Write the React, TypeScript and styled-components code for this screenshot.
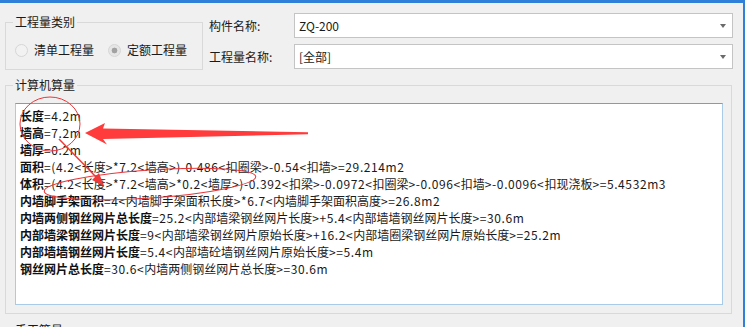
import React from "react";
import styled, { createGlobalStyle } from "styled-components";

const Global = createGlobalStyle`
  html, body { margin: 0; padding: 0; background: #ffffff; }
  body { font-family: "Noto Sans CJK SC", "Noto Sans", sans-serif; font-size: 12px; color: #1a1a1a; }
  * { box-sizing: border-box; }
`;

const Page = styled.div`
  width: 756px;
  height: 327px;
  position: relative;
  overflow: hidden;
  background: #ffffff;
`;

const Window = styled.div`
  width: 745px;
  height: 327px;
  background: #f0f0f0;
  border-top: 3px solid #2f80d8;
  border-right: 2px solid #2f80d8;
  padding-left: 5px;
  overflow: hidden;
`;

const TopRow = styled.div`
  display: flex;
  align-items: flex-start;
  padding-top: 10px;
`;

const Group = styled.fieldset<{ $w: number; $h: number; $mt: number }>`
  margin: ${(p) => p.$mt}px 0 0 0;
  padding: 0 9px;
  min-width: 0;
  flex-shrink: 0;
  width: ${(p) => p.$w}px;
  height: ${(p) => p.$h}px;
  border: 1px solid #d9d9d9;
  border-radius: 0;
`;

const Legend = styled.legend`
  padding: 0 2px;
  margin-left: -2px;
  font-size: 12px;
  line-height: 16px;
  color: #1a1a1a;
  white-space: nowrap;
`;

const RadioRow = styled.div`
  display: flex;
  align-items: center;
  height: 16px;
  margin-top: 12px;
`;

const RadioItem = styled.label`
  display: flex;
  align-items: center;
  flex-shrink: 0;
  gap: 6px;
  margin-right: 14px;
  line-height: 16px;
  white-space: nowrap;
  color: #1a1a1a;
`;

const RadioCircle = styled.span<{ $checked?: boolean }>`
  width: 13px;
  height: 13px;
  flex-shrink: 0;
  border-radius: 50%;
  border: 1px solid #d6d6d6;
  background: ${(p) =>
    p.$checked
      ? "radial-gradient(circle, #a2a2a2 0 2.6px, #e6e6e6 3.2px 100%)"
      : "#f2f2f2"};
`;

const FormGrid = styled.div`
  display: grid;
  grid-template-columns: 85px 439px;
  grid-auto-rows: 25px;
  row-gap: 6px;
  margin-left: 6px;
  align-items: center;
`;

const FieldLabel = styled.span`
  font-size: 12px;
  color: #1a1a1a;
  line-height: 25px;
  white-space: nowrap;
`;

const Select = styled.div`
  position: relative;
  height: 25px;
  background: #ffffff;
  border: 1px solid #c4c4c4;
  padding-left: 4px;
  line-height: 23px;
  font-size: 12px;
  color: #1a1a1a;
  &::after {
    content: "";
    position: absolute;
    right: 6px;
    top: 10px;
    border-left: 3px solid transparent;
    border-right: 3px solid transparent;
    border-top: 4px solid #6a6a6a;
  }
`;

const Latin = styled.span`
  letter-spacing: 0.6px;
`;

const TextBox = styled.div`
  width: 708px;
  height: 202px;
  margin-top: 10px;
  background: #ffffff;
  border: 1px solid #a9cbe8;
  border-top-color: #7a9dc3;
  padding: 3px 4px;
  overflow: hidden;
`;

const Line = styled.div`
  line-height: 17px;
  height: 17px;
  white-space: nowrap;
  font-size: 12px;
  color: #1a1a1a;
  b { font-weight: 700; color: #111; }
`;

const Overlay = styled.svg`
  position: absolute;
  left: 0;
  top: 0;
  pointer-events: none;
`;

const lines: [string, string][] = [
  ["长度", "=4.2m"],
  ["墙高", "=7.2m"],
  ["墙厚", "=0.2m"],
  ["面积", "=(4.2<长度>*7.2<墙高>)-0.486<扣圈梁>-0.54<扣墙>=29.214m2"],
  ["体积", "=(4.2<长度>*7.2<墙高>*0.2<墙厚>)-0.392<扣梁>-0.0972<扣圈梁>-0.096<扣墙>-0.0096<扣现浇板>=5.4532m3"],
  ["内墙脚手架面积", "=4<内墙脚手架面积长度>*6.7<内墙脚手架面积高度>=26.8m2"],
  ["内墙两侧钢丝网片总长度", "=25.2<内部墙梁钢丝网片长度>+5.4<内部墙墙钢丝网片长度>=30.6m"],
  ["内部墙梁钢丝网片长度", "=9<内部墙梁钢丝网片原始长度>+16.2<内部墙圈梁钢丝网片原始长度>=25.2m"],
  ["内部墙墙钢丝网片长度", "=5.4<内部墙砼墙钢丝网片原始长度>=5.4m"],
  ["钢丝网片总长度", "=30.6<内墙两侧钢丝网片总长度>=30.6m"],
];

function Value({ text }: { text: string }) {
  const parts = text.match(/[\x00-\x7f]+|[^\x00-\x7f]+/g) || [];
  return (
    <>
      {parts.map((p, i) =>
        /^[\x00-\x7f]/.test(p) ? <Latin key={i}>{p}</Latin> : <span key={i}>{p}</span>
      )}
    </>
  );
}

export default function App() {
  return (
    <Page>
      <Global />
      <Window>
        <TopRow>
          <Group $w={198} $h={56} $mt={1}>
            <Legend>工程量类别</Legend>
            <RadioRow>
              <RadioItem>
                <RadioCircle />
                清单工程量
              </RadioItem>
              <RadioItem>
                <RadioCircle $checked />
                定额工程量
              </RadioItem>
            </RadioRow>
          </Group>
          <FormGrid>
            <FieldLabel>构件名称:</FieldLabel>
            <Select>ZQ-200</Select>
            <FieldLabel>工程量名称:</FieldLabel>
            <Select>[全部]</Select>
          </FormGrid>
        </TopRow>
        <Group $w={727} $h={237} $mt={7}>
          <Legend>计算机算量</Legend>
          <TextBox>
            {lines.map(([k, v]) => (
              <Line key={k}>
                <b>{k}</b>
                <Value text={v} />
              </Line>
            ))}
          </TextBox>
        </Group>
        <Group $w={727} $h={60} $mt={8}>
          <Legend>手工算量</Legend>
        </Group>
      </Window>
      <Overlay width={756} height={327} viewBox="0 0 756 327">
        <ellipse cx={50} cy={124} rx={30} ry={27} fill="none" stroke="#e8373a" strokeWidth={1} />
        <g transform="rotate(-4 150 184)">
          <ellipse cx={150} cy={184} rx={106} ry={14} fill="none" stroke="#e8373a" strokeWidth={1} />
        </g>
        <line x1={59} y1={139} x2={97} y2={178} stroke="#f03a3a" strokeWidth={1.5} />
        <polygon points="104,186 92,180 99,173" fill="#f03a3a" />
        <polygon
          points="85,133 105,123 103,128.5 308,132.3 308,134.3 103,139 107,144.5"
          fill="#ff3b3b"
        />
      </Overlay>
    </Page>
  );
}
